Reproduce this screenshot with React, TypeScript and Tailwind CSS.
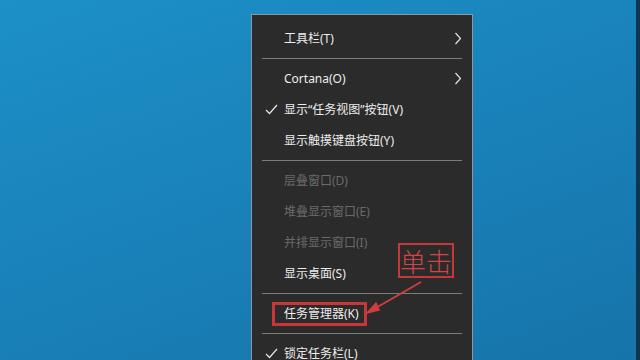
import { Fragment } from "react";

type Item = {
    label: string;
    checked?: boolean;
    submenu?: boolean;
    disabled?: boolean;
    highlight?: boolean;
};

const groups: Item[][] = [
    [{ label: "工具栏(T)", submenu: true }],
    [
        { label: "Cortana(O)", submenu: true },
        { label: "显示“任务视图”按钮(V)", checked: true },
        { label: "显示触摸键盘按钮(Y)" },
    ],
    [
        { label: "层叠窗口(D)", disabled: true },
        { label: "堆叠显示窗口(E)", disabled: true },
        { label: "并排显示窗口(I)", disabled: true },
        { label: "显示桌面(S)" },
    ],
    [{ label: "任务管理器(K)", highlight: true }],
    [{ label: "锁定任务栏(L)", checked: true }],
];

function Check() {
    return (
        <svg width="13" height="11" viewBox="0 0 13 11" className="absolute left-[13px] top-[10px]">
            <path d="M1 6 L4.5 9.5 L12 1" fill="none" stroke="#e6e6e6" strokeWidth="1.2" />
        </svg>
    );
}

function Chevron() {
    return (
        <svg width="8" height="13" viewBox="0 0 8 13" className="absolute right-[10px] top-[9px]">
            <path d="M1.5 1 L6.5 6.5 L1.5 12" fill="none" stroke="#e6e6e6" strokeWidth="1.2" />
        </svg>
    );
}

function MenuRow({ item }: { item: Item }) {
    return (
        <div
            className={`relative h-[31px] flex items-center pl-[32px] text-[12px] leading-none
                ${item.disabled ? "text-[#6a6a6a]" : "text-[#ececec]"}`}
        >
            {item.checked && <Check />}
            {item.highlight ? (
                <span className="relative">
                    {item.label}
                    <span className="absolute -left-[12px] -top-[6px] w-[95px] h-[24px] border-[3px] border-[#c4383a]" />
                </span>
            ) : (
                <span>{item.label}</span>
            )}
            {item.submenu && <Chevron />}
        </div>
    );
}

export default function App() {
    return (
        <div
            className="relative w-[640px] h-[360px] overflow-hidden
                bg-[linear-gradient(160deg,#1d90c8_0%,#1a84bc_40%,#1674aa_100%)]
                pl-[251px] pt-[14px]"
            style={{ fontFamily: '"Noto Sans", "Noto Sans CJK SC", sans-serif' }}
        >
            <div className="absolute right-0 top-0 w-[4px] h-full bg-[#0f3550]" />

            <div className="w-[222px] h-[400px] bg-[#2b2b2b] border border-[#8d979d] pt-[8px]">
                {groups.map((group, gi) => (
                    <Fragment key={gi}>
                        {gi > 0 && (
                            <div className="h-[9px] flex items-center px-[10px]">
                                <div className="w-full h-px bg-[#7d7d7d]" />
                            </div>
                        )}
                        {group.map((item) => (
                            <MenuRow key={item.label} item={item} />
                        ))}
                    </Fragment>
                ))}
            </div>

            {/* annotation */}
            <div
                className="absolute left-[398px] top-[243px] w-[56px] h-[35px] border-[2px] border-[#c4383a]
                    flex items-center justify-center whitespace-nowrap text-[26px] leading-none text-[#d0454a]"
                style={{ fontFamily: '"Noto Sans CJK SC", sans-serif', fontWeight: 300 }}
            >
                单击
            </div>
            <svg className="absolute left-0 top-0" width="640" height="360">
                <line x1="421" y1="282" x2="374" y2="309" stroke="#d03e40" strokeWidth="2" />
                <path d="M367 313 L376 303 L379 310 Z" fill="#d03e40" stroke="#d03e40" strokeWidth="1.5" />
            </svg>
        </div>
    );
}
